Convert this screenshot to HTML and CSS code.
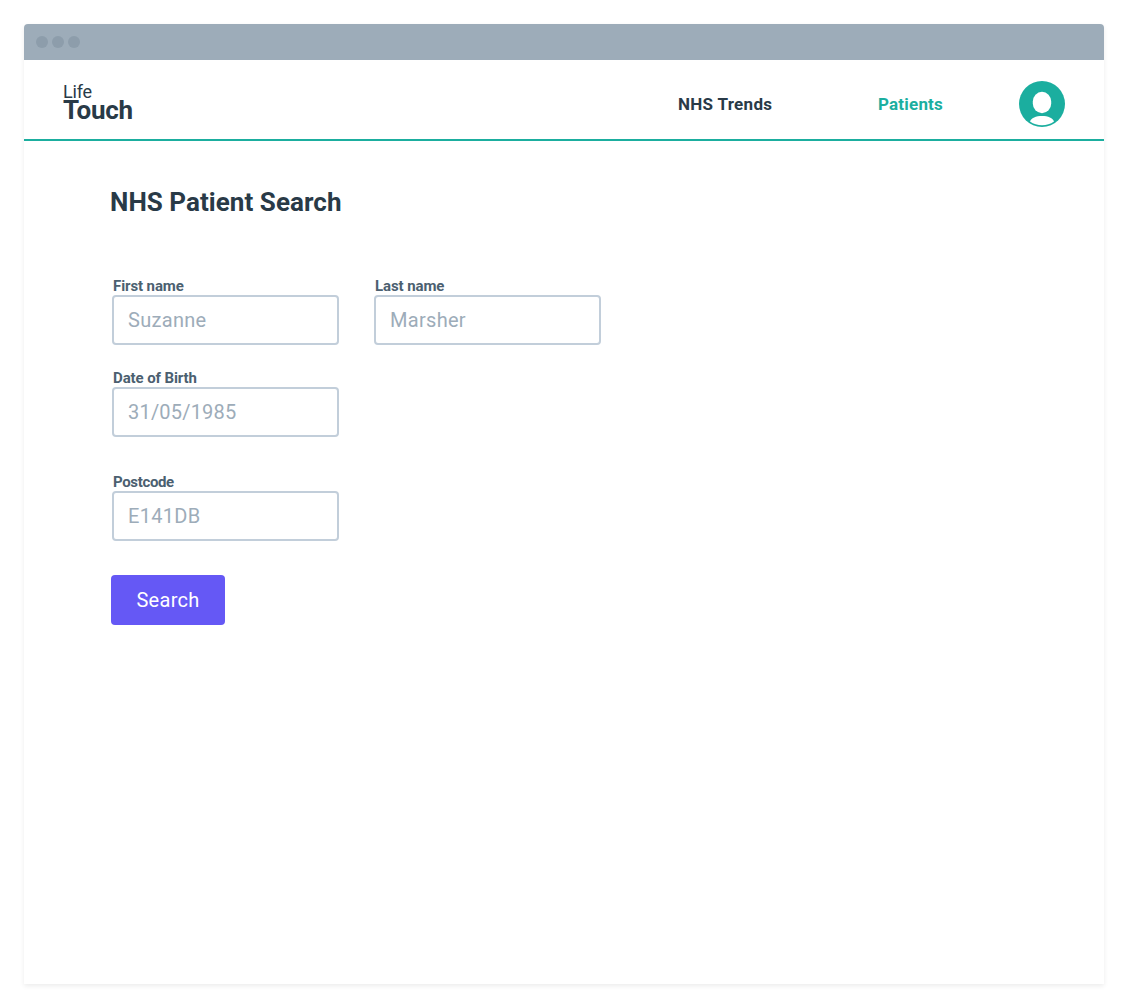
FILE: index.html
```html
<!DOCTYPE html>
<html lang="en">
<head>
<meta charset="utf-8">
<title>Life Touch</title>
<link rel="stylesheet" href="styles.css">
</head>
<body>
<div class="window">
  <div class="titlebar"><span class="dot"></span><span class="dot"></span><span class="dot"></span></div>
  <header class="header">
    <div class="logo"><span class="logo-top">Life</span><span class="logo-bottom">Touch</span></div>
    <nav class="nav">
      <a class="nav-link trends">NHS Trends</a>
      <a class="nav-link active">Patients</a>
      <svg class="avatar" viewBox="0 0 46 46" width="46" height="46">
        <circle cx="23" cy="23" r="23" fill="#1bae9f"/>
        <rect x="13.800" y="10.800" width="18.400" height="21.400" rx="9.200" ry="9.800" fill="#fff"/>
        <path d="M11 40.500C12 37 17 35 23 35s11 2 12 5.500C31.500 43 27.500 44.200 23 44.200S14.500 43 11 40.500Z" fill="#fff"/>
      </svg>
    </nav>
  </header>
  <main class="content">
    <h1 class="title">NHS Patient Search</h1>
    <form class="form">
      <div class="row">
        <label class="field"><span class="label">First name</span><span class="input">Suzanne</span></label>
        <label class="field"><span class="label">Last name</span><span class="input">Marsher</span></label>
      </div>
      <label class="field birth"><span class="label">Date of Birth</span><span class="input date">31/05/1985</span></label>
      <label class="field postcode"><span class="label tight">Postcode</span><span class="input">E141DB</span></label>
      <button class="button" type="button">Search</button>
    </form>
  </main>
</div>
</body>
</html>
```
FILE: styles.css
```css
* { box-sizing: border-box; }
body {
  margin: 0;
  padding: 24px;
  background: #fff;
  color: #293a47;
  font-family: Roboto, "Liberation Sans", sans-serif;
}
.window {
  height: 960px;
  border-radius: 4px 4px 0 0;
  background: #fff;
  box-shadow: 0 2px 5px rgba(0, 0, 0, 0.08);
}
.titlebar {
  display: flex;
  align-items: center;
  gap: 4px;
  height: 36px;
  padding-left: 12px;
  border-radius: 4px 4px 0 0;
  background: #9dacb9;
}
.dot { width: 12px; height: 12px; border-radius: 50%; background: #8d9dab; }
.header {
  display: flex;
  justify-content: space-between;
  height: 81px;
  padding: 0 39px;
  border-bottom: 2px solid #1bae9f;
}
.logo { display: flex; flex-direction: column; padding-top: 25px; }
.logo-top { font-size: 18px; line-height: 14px; letter-spacing: -0.2px; }
.logo-bottom { font-size: 26px; line-height: 22px; font-weight: 700; letter-spacing: -0.3px; }
.nav { display: flex; align-items: center; padding-top: 8px; }
.nav-link { font-size: 17px; line-height: 20px; font-weight: 700; white-space: nowrap; }
.trends { width: 200px; letter-spacing: 0.3px; }
.active { width: 141px; color: #1bae9f; letter-spacing: 0.2px; }
.avatar { display: block; }
.content { padding: 44px 86px; }
.title { margin: 0; font-size: 26px; line-height: 34px; font-weight: 700; letter-spacing: 0.05px; }
.form { display: flex; flex-direction: column; align-items: flex-start; padding: 58px 0 0 1px; }
.row { display: flex; gap: 35px; padding-left: 1px; }
.field { display: flex; flex-direction: column; }
.birth { margin: 24px 0 0 1px; }
.postcode { margin: 36px 0 30px 1px; }
.label { padding-left: 1px; font-size: 15px; line-height: 18px; font-weight: 700; color: #4b6070; letter-spacing: -0.1px; }
.label.tight { letter-spacing: -0.35px; }
.input {
  width: 227px;
  height: 50px;
  padding-left: 14px;
  border: 2px solid #c2ceda;
  border-radius: 4px;
  background: #fff;
  color: #9dacb9;
  font-size: 20px;
  line-height: 47px;
  letter-spacing: 0.3px;
}
.input.date { letter-spacing: 0.2px; }
.button {
  width: 114px;
  height: 50px;
  margin-top: 4px;
  padding: 0;
  border: 0;
  border-radius: 4px;
  background: #6558f5;
  color: #fff;
  font: 20px/50px Roboto, "Liberation Sans", sans-serif;
  letter-spacing: 0.3px;
}
```
